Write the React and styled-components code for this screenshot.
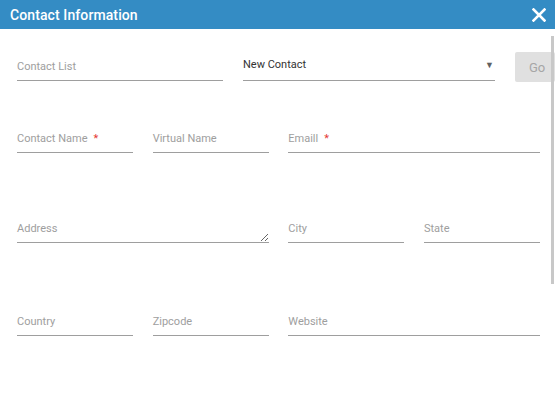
import React from 'react';
import styled, { createGlobalStyle } from 'styled-components';

const GlobalStyle = createGlobalStyle`
  html, body {
    margin: 0;
    padding: 0;
    background: #ffffff;
    font-family: Roboto, "Liberation Sans", Arial, sans-serif;
  }
`;

const Dialog = styled.div`
  width: 555px;
  height: 399px;
  display: flex;
  flex-direction: column;
  overflow: hidden;
  background: #ffffff;
`;

const Header = styled.div`
  height: 29px;
  flex: none;
  background: #348cc4;
  display: flex;
  align-items: center;
  justify-content: space-between;
  padding: 0 8px 0 10px;
`;

const Title = styled.h1`
  margin: 0;
  color: #ffffff;
  font-size: 14px;
  font-weight: 500;
  letter-spacing: 0.1px;
`;

const CloseButton = styled.button`
  border: none;
  background: none;
  padding: 0;
  width: 16px;
  height: 16px;
  display: flex;
  align-items: center;
  justify-content: center;
  cursor: pointer;
`;

const Body = styled.div`
  position: relative;
  flex: 1;
  padding: 23px 0 0 17px;
`;

const ScrollThumb = styled.div`
  position: absolute;
  right: 1px;
  top: 7px;
  width: 3px;
  height: 248px;
  background: #c8c8c8;
`;

const Row = styled.div`
  display: grid;
  grid-template-columns: ${p => p.$cols};
  column-gap: ${p => p.$gap || 20}px;
  margin-top: ${p => p.$top}px;
  align-items: end;
`;

const Field = styled.label`
  position: relative;
  display: block;
  grid-column: span ${p => p.$span || 1};
  border-bottom: 1px solid #9e9e9e;
  height: ${p => p.$h || 28}px;
`;

const Input = styled.input`
  width: 100%;
  height: 100%;
  box-sizing: border-box;
  border: none;
  outline: none;
  background: transparent;
  font-family: inherit;
  font-size: 11px;
  color: #212121;
  padding: 0;
`;

const TextArea = styled.textarea`
  display: block;
  width: 100%;
  height: 100%;
  box-sizing: border-box;
  border: none;
  outline: none;
  background: transparent;
  font-family: inherit;
  font-size: 11px;
  padding: 0;
  resize: vertical;
`;

const Placeholder = styled.span`
  position: absolute;
  left: 0;
  top: ${p => p.$top || 8}px;
  font-size: 11px;
  color: #9e9e9e;
  pointer-events: none;
  white-space: nowrap;
`;

const Star = styled.span`
  color: #e53935;
  margin-left: 6px;
`;

const SelectBox = styled.div`
  position: relative;
  height: 28px;
  border-bottom: 1px solid #9e9e9e;
  display: flex;
  align-items: center;
  justify-content: space-between;
  padding-bottom: 4px;
  box-sizing: border-box;
  font-size: 11px;
  color: #333333;
`;

const Caret = styled.span`
  font-size: 9px;
  color: #616161;
  margin-right: 1px;
`;

const GoButton = styled.button`
  height: 30px;
  margin-bottom: -1px;
  border: none;
  border-radius: 2px;
  background: #e0e0e0;
  color: #a6a6a6;
  font-family: inherit;
  font-size: 13px;
  text-align: left;
  padding: 0 0 0 14px;
`;

const FormCols = '116px 116px 116px 116px';
const FormGap = 19.67;

function TextField({ label, required, span, h, top, area }) {
  return (
    <Field $span={span} $h={h}>
      {area ? <TextArea /> : <Input />}
      <Placeholder $top={top}>
        {label}
        {required && <Star>*</Star>}
      </Placeholder>
    </Field>
  );
}

export default function App() {
  return (
    <>
      <GlobalStyle />
      <Dialog>
        <Header>
          <Title>Contact Information</Title>
          <CloseButton aria-label="Close">
            <svg width="14" height="14" viewBox="0 0 14 14">
              <path d="M1.5 1.5 L12.5 12.5 M12.5 1.5 L1.5 12.5" stroke="#ffffff" strokeWidth="2.6" strokeLinecap="square" />
            </svg>
          </CloseButton>
        </Header>
        <Body>
          <ScrollThumb />
          <Row $cols="206px 252px 40px" $top={0}>
            <TextField label="Contact List" />
            <SelectBox>
              <span>New Contact</span>
              <Caret>▼</Caret>
            </SelectBox>
            <GoButton>Go</GoButton>
          </Row>
          <Row $cols={FormCols} $gap={FormGap} $top={43}>
            <TextField label="Contact Name" required />
            <TextField label="Virtual Name" />
            <TextField label="Emaill" required span={2} />
          </Row>
          <Row $cols={FormCols} $gap={FormGap} $top={61}>
            <TextField label="Address" span={2} area h={28} />
            <TextField label="City" />
            <TextField label="State" />
          </Row>
          <Row $cols={FormCols} $gap={FormGap} $top={64}>
            <TextField label="Country" />
            <TextField label="Zipcode" />
            <TextField label="Website" span={2} />
          </Row>
        </Body>
      </Dialog>
    </>
  );
}
